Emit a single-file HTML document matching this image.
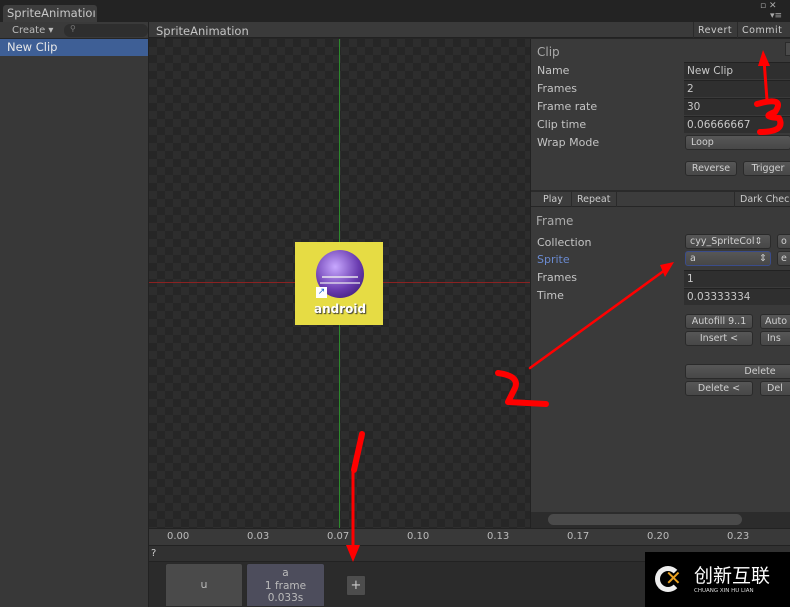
<!DOCTYPE html>
<html><head><meta charset="utf-8"><style>
*{margin:0;padding:0;box-sizing:border-box}
body{width:790px;height:607px;overflow:hidden;background:#262626;font-family:"DejaVu Sans","Liberation Sans",sans-serif;font-size:10px;color:#c8c8c8;position:relative}
.a{position:absolute}
.btn{position:absolute;background:linear-gradient(#575757,#474747);border:1px solid #2a2a2a;border-radius:3px;color:#d0d0d0;font-size:9.5px;text-align:center;line-height:13px;height:15px}
.fld{position:absolute;background:#2f2f2f;border-top:1px solid #222;color:#c8c8c8;font-size:10.5px;padding-left:3px;height:17px;line-height:16px}
.lbl{position:absolute;font-size:11px;color:#c4c4c4;left:537px}
.t{position:absolute;top:531px;font-size:10px;color:#bbb}
</style></head><body>
<div class="a" style="left:0;top:0;width:790px;height:22px;background:#232323"></div>
<div class="a" style="left:3px;top:5px;width:94px;height:17px;background:#3d3d3d;border-radius:3px 3px 0 0;font-size:11.5px;padding-left:4px;line-height:17px;color:#c8c8c8">SpriteAnimatio&#x131;</div>
<div class="a" style="left:760px;top:1px;font-size:9px;color:#aaa">▫ ✕</div>
<div class="a" style="left:770px;top:11px;font-size:9px;color:#aaa">▾≡</div>
<div class="a" style="left:0;top:22px;width:148px;height:585px;background:#383838"></div>
<div class="a" style="left:0;top:22px;width:148px;height:17px;background:#3a3a3a;border-bottom:1px solid #252525"></div>
<div class="a" style="left:12px;top:25px;font-size:10px;color:#bbb">Create ▾</div>
<div class="a" style="left:64px;top:24px;width:84px;height:13px;background:#2e2e2e;border-radius:6px;font-size:8px;color:#777;padding-left:6px">⚲</div>
<div class="a" style="left:0;top:39px;width:148px;height:17px;background:#3e5f96;font-size:11.5px;color:#e8e8e8;padding-left:7px;line-height:17px">New Clip</div>
<div class="a" style="left:148px;top:22px;width:1px;height:585px;background:#222"></div>
<div class="a" style="left:149px;top:22px;width:641px;height:16px;background:#3a3a3a;border-bottom:1px solid #222"></div>
<div class="a" style="left:156px;top:24px;font-size:11.5px;color:#c4c4c4">SpriteAnimation</div>
<div class="a" style="left:693px;top:22px;width:1px;height:16px;background:#2a2a2a"></div>
<div class="a" style="left:698px;top:25px;font-size:9.5px;color:#ccc;letter-spacing:.5px">Revert</div>
<div class="a" style="left:737px;top:22px;width:1px;height:16px;background:#2a2a2a"></div>
<div class="a" style="left:742px;top:25px;font-size:9.5px;color:#ccc;letter-spacing:.5px">Commit</div>
<div class="a" style="left:149px;top:39px;width:382px;height:489px;background-color:#262626;background-image:linear-gradient(45deg,#2d2d2d 25%,transparent 25%,transparent 75%,#2d2d2d 75%),linear-gradient(45deg,#2d2d2d 25%,transparent 25%,transparent 75%,#2d2d2d 75%);background-size:16px 16px;background-position:0 0,8px 8px"></div>
<div class="a" style="left:339px;top:39px;width:1px;height:489px;background:#2e8a2e"></div>
<div class="a" style="left:149px;top:282px;width:382px;height:1px;background:#8a2222"></div>
<div class="a" style="left:295px;top:242px;width:88px;height:83px;background:#e6dc44"></div>
<div class="a" style="left:316px;top:250px;width:48px;height:48px;border-radius:50%;background:radial-gradient(circle at 40% 35%,#c8a8ff,#6a3cb0 55%,#2d1060)"></div>
<div class="a" style="left:322px;top:276px;width:36px;height:2px;background:#eee;opacity:.7"></div>
<div class="a" style="left:320px;top:282px;width:40px;height:2px;background:#eee;opacity:.6"></div>
<div class="a" style="left:316px;top:287px;width:11px;height:11px;background:#fff;color:#2266cc;font-size:9px;line-height:11px;text-align:center">↗</div>
<div class="a" style="left:314px;top:302px;font-size:12px;font-weight:bold;color:#fff;text-shadow:1px 1px 1px #333">android</div>
<div class="a" style="left:531px;top:39px;width:259px;height:473px;background:#3a3a3a"></div>
<div class="a" style="left:530px;top:39px;width:1px;height:489px;background:#222"></div>
<div class="a" style="left:537px;top:45px;font-size:12px;color:#aaa">Clip</div>
<div class="a" style="left:785px;top:42px;width:8px;height:14px;background:#4a4a4a;border:1px solid #2a2a2a"></div>
<div class="lbl" style="top:64px">Name</div>
<div class="lbl" style="top:82px">Frames</div>
<div class="lbl" style="top:100px">Frame rate</div>
<div class="lbl" style="top:118px">Clip time</div>
<div class="lbl" style="top:136px">Wrap Mode</div>
<div class="fld" style="left:684px;top:62px;width:106px">New Clip</div>
<div class="fld" style="left:684px;top:80px;width:106px">2</div>
<div class="fld" style="left:684px;top:98px;width:106px">30</div>
<div class="fld" style="left:684px;top:116px;width:106px">0.06666667</div>
<div class="btn" style="left:685px;top:135px;width:106px;text-align:left;padding-left:5px">Loop</div>
<div class="btn" style="left:685px;top:161px;width:52px">Reverse</div>
<div class="btn" style="left:743px;top:161px;width:50px">Trigger</div>
<div class="a" style="left:531px;top:190px;width:259px;height:17px;background:#3c3c3c;border-top:2px solid #2a2a2a;border-bottom:1px solid #262626"></div>
<div class="a" style="left:543px;top:194px;font-size:9.5px;color:#ccc">Play</div>
<div class="a" style="left:571px;top:191px;width:1px;height:16px;background:#2a2a2a"></div>
<div class="a" style="left:577px;top:194px;font-size:9.5px;color:#ccc">Repeat</div>
<div class="a" style="left:616px;top:191px;width:1px;height:16px;background:#2a2a2a"></div>
<div class="a" style="left:734px;top:191px;width:1px;height:16px;background:#2a2a2a"></div>
<div class="a" style="left:740px;top:194px;font-size:9.5px;color:#ccc">Dark Chec</div>
<div class="a" style="left:536px;top:214px;font-size:12px;color:#aaa">Frame</div>
<div class="lbl" style="top:236px">Collection</div>
<div class="lbl" style="top:253px;color:#6a8ad0">Sprite</div>
<div class="lbl" style="top:271px">Frames</div>
<div class="lbl" style="top:289px">Time</div>
<div class="btn" style="left:685px;top:234px;width:86px;text-align:left;padding-left:4px">cyy_SpriteCol⇕</div>
<div class="btn" style="left:777px;top:234px;width:20px;text-align:left;padding-left:3px">o</div>
<div class="btn" style="left:685px;top:251px;width:86px;text-align:left;padding-left:4px;border-color:#3a4c8a">a<span style="float:right;padding-right:3px">⇕</span></div>
<div class="btn" style="left:777px;top:251px;width:20px;text-align:left;padding-left:3px">e</div>
<div class="fld" style="left:684px;top:270px;width:106px">1</div>
<div class="fld" style="left:684px;top:288px;width:106px">0.03333334</div>
<div class="btn" style="left:685px;top:314px;width:68px">Autofill 9..1</div>
<div class="btn" style="left:760px;top:314px;width:40px;text-align:left;padding-left:4px">Auto</div>
<div class="btn" style="left:685px;top:331px;width:68px">Insert &lt;</div>
<div class="btn" style="left:760px;top:331px;width:40px;text-align:left;padding-left:6px">Ins</div>
<div class="btn" style="left:685px;top:364px;width:110px;padding-left:40px">Delete</div>
<div class="btn" style="left:685px;top:381px;width:68px">Delete &lt;</div>
<div class="btn" style="left:760px;top:381px;width:40px;text-align:left;padding-left:6px">Del</div>
<div class="a" style="left:531px;top:512px;width:259px;height:16px;background:#2c2c2c"></div>
<div class="a" style="left:548px;top:514px;width:194px;height:11px;background:#4a4a4a;border-radius:6px"></div>
<div class="a" style="left:149px;top:528px;width:641px;height:18px;background:#393939;border-top:1px solid #222;border-bottom:1px solid #222"></div>
<div class="t" style="left:167px">0.00</div><div class="t" style="left:247px">0.03</div><div class="t" style="left:327px">0.07</div><div class="t" style="left:407px">0.10</div><div class="t" style="left:487px">0.13</div><div class="t" style="left:567px">0.17</div><div class="t" style="left:647px">0.20</div><div class="t" style="left:727px">0.23</div>
<div class="a" style="left:149px;top:546px;width:641px;height:16px;background:#313131;border-bottom:1px solid #222"></div>
<div class="a" style="left:151px;top:548px;font-size:10px;color:#ccc">?</div>
<div class="a" style="left:149px;top:562px;width:641px;height:45px;background:#2b2b2b"></div>
<div class="a" style="left:165px;top:563px;width:78px;height:44px;background:#4a4a4a;border:1px solid #2a2a2a;border-radius:3px 3px 0 0;text-align:center;line-height:42px;color:#bbb;font-size:11px">u</div>
<div class="a" style="left:246px;top:563px;width:79px;height:44px;background:#4d4d5c;border:1px solid #2a2a2a;border-radius:3px 3px 0 0;text-align:center;font-size:10.5px;line-height:12.5px;color:#bbb;padding-top:3px">a<br>1 frame<br>0.033s</div>
<div class="a" style="left:346px;top:575px;width:20px;height:21px;background:#4d4d4d;border:1px solid #2a2a2a;border-radius:2px;text-align:center;line-height:19px;color:#ccc;font-size:13px">+</div>
<div class="a" style="left:645px;top:552px;width:145px;height:55px;background:#000"></div>
<div class="a" style="left:655px;top:566px;width:26px;height:26px;border-radius:50%;border:5px solid #eee;border-right-color:transparent"></div>
<div class="a" style="left:665px;top:566px;font-size:20px;font-weight:bold;color:#e8a020">✕</div>
<div class="a" style="left:694px;top:564px;font-family:'Noto Sans CJK SC',sans-serif;font-size:19px;color:#fff;line-height:22px">创新互联</div>
<div class="a" style="left:694px;top:588px;font-size:5.5px;color:#ddd">CHUANG XIN HU LIAN</div>
<svg class="a" style="left:0;top:0" width="790" height="607">
<g stroke="#f00" fill="none" stroke-linecap="round" stroke-linejoin="round">
<path d="M530 368 L665 270" stroke-width="2.5"/>
<path d="M498 373 Q520 376 515 388 L508 402 L546 404" stroke-width="6"/>
<path d="M362 434 L354 470" stroke-width="6"/>
<path d="M353 470 L353 548" stroke-width="3"/>
<path d="M764 60 L767 100" stroke-width="3"/>
<path d="M757 104 Q786 96 775 112 Q760 117 779 118 Q786 132 760 132" stroke-width="6"/>
</g>
<g fill="#f00">
<polygon points="674,262 660,265 665,277"/>
<polygon points="346,545 360,545 353,562"/>
<polygon points="758,66 770,66 763,50"/>
</g>
</svg>
</body></html>
